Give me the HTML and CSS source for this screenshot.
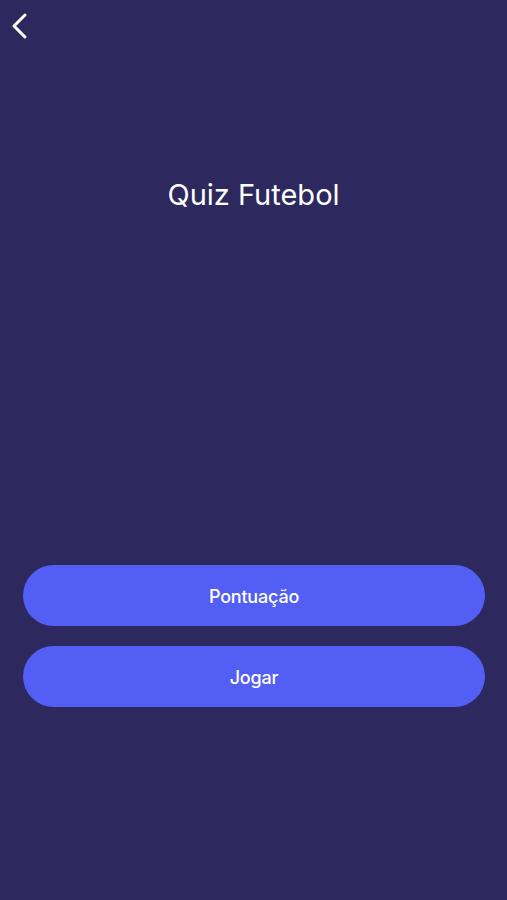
FILE: index.html
```html
<!DOCTYPE html>
<html lang="pt">
<head>
<meta charset="utf-8">
<link rel="stylesheet" href="styles.css">
</head>
<body>
<div class="screen">
  <header class="topbar">
    <button class="back" aria-label="Voltar">
      <svg width="18" height="28" viewBox="0 0 18 28"><path d="M14 3 L3 14 L14 25" fill="none" stroke="#fff" stroke-width="3" stroke-linecap="round" stroke-linejoin="round"/></svg>
    </button>
  </header>
  <h1 class="title">Quiz Futebol</h1>
  <div class="actions">
    <button class="btn">Pontuação</button>
    <button class="btn">Jogar</button>
  </div>
</div>
</body>
</html>
```
FILE: styles.css
```css
html, body {
  margin: 0;
  padding: 0;
  background: #2d295e;
}
.screen {
  width: 507px;
  height: 900px;
  display: flex;
  flex-direction: column;
  font-family: Inter, "Liberation Sans", sans-serif;
  color: #fff;
}
.topbar {
  height: 52px;
  display: flex;
  align-items: flex-start;
  padding: 12px 0 0 9px;
  box-sizing: border-box;
}
.back {
  background: none;
  border: 0;
  padding: 0;
  width: 22px;
  height: 28px;
  display: flex;
  align-items: center;
  justify-content: center;
  cursor: pointer;
}
.title {
  margin: 125px 0 0;
  text-align: center;
  font-size: 29px;
  font-weight: 400;
  line-height: 36px;
  letter-spacing: 0;
}
.actions {
  margin-top: 352px;
  padding: 0 22px 0 23px;
  display: flex;
  flex-direction: column;
  gap: 20px;
}
.btn {
  height: 61px;
  border: 0;
  border-radius: 31px;
  background: #535ff4;
  color: #fff;
  font-family: Inter, "Liberation Sans", sans-serif;
  font-size: 18px;
  font-weight: 500;
  letter-spacing: -0.2px;
  padding-top: 2px;
}
```
